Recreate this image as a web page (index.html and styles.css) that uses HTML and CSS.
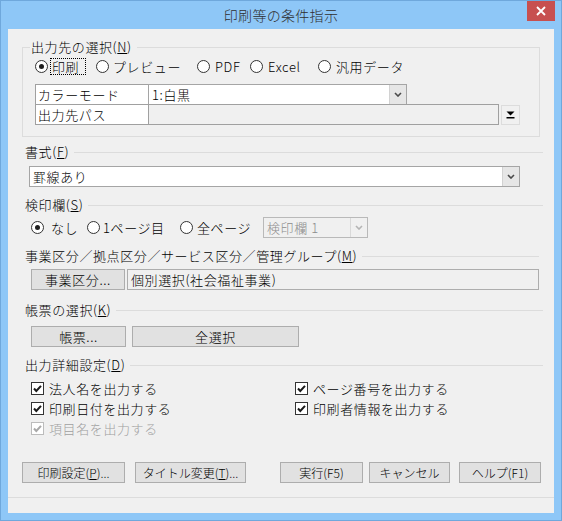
FILE: index.html
```html
<!DOCTYPE html>
<html lang="ja">
<head>
<meta charset="utf-8">
<title>印刷等の条件指示</title>
<link rel="stylesheet" href="styles.css">
</head>
<body>
<div class="window">
  <div class="titlebar">
    <div class="title">印刷等の条件指示</div>
    <div class="close"><svg width="10" height="10" viewBox="0 0 10 10"><path d="M1 1L9 9M9 1L1 9" stroke="#fff" stroke-width="1.8" fill="none"/></svg></div>
  </div>
  <div class="client">
    <fieldset class="group">
      <legend>出力先の選択(<u>N</u>)</legend>
      <div class="radios">
        <div class="ritem r1"><span class="rb on"></span><span class="focus">印刷</span></div>
        <div class="ritem r2"><span class="rb"></span><span>プレビュー</span></div>
        <div class="ritem r3"><span class="rb"></span><span>PDF</span></div>
        <div class="ritem r4"><span class="rb"></span><span>Excel</span></div>
        <div class="ritem r5"><span class="rb"></span><span>汎用データ</span></div>
      </div>
      <div class="grid">
        <div class="row">
          <div class="key">カラーモード</div>
          <div class="combo mode"><span class="val">1:白黒</span><span class="dd"><svg width="8" height="5" viewBox="0 0 8 5"><path d="M1 1L4 4L7 1" stroke="#4a4a4a" stroke-width="1.6" fill="none"/></svg></span></div>
        </div>
        <div class="row">
          <div class="key">出力先パス</div>
          <div class="path"></div>
          <div class="browse"><svg width="9" height="8" viewBox="0 0 9 8"><path d="M0.5 0.5H8.5L4.5 4.5Z" fill="#000"/><rect x="0.5" y="6" width="8" height="1.5" fill="#000"/></svg></div>
        </div>
      </div>
    </fieldset>

    <div class="hdr h-fmt"><span>書式(<u>F</u>)</span><i></i></div>
    <div class="combo fmt"><span class="val">罫線あり</span><span class="dd"><svg width="8" height="5" viewBox="0 0 8 5"><path d="M1 1L4 4L7 1" stroke="#4a4a4a" stroke-width="1.6" fill="none"/></svg></span></div>

    <div class="hdr h-stamp"><span>検印欄(<u>S</u>)</span><i></i></div>
    <div class="stamprow">
      <div class="ritem s1"><span class="rb on"></span><span>なし</span></div>
      <div class="ritem s2"><span class="rb"></span><span>1ページ目</span></div>
      <div class="ritem s3"><span class="rb"></span><span>全ページ</span></div>
      <div class="combo stamp disabled"><span class="val">検印欄 1</span><span class="dd"><svg width="8" height="5" viewBox="0 0 8 5"><path d="M1 1L4 4L7 1" stroke="#b4b4b4" stroke-width="1.6" fill="none"/></svg></span></div>
    </div>

    <div class="hdr h-biz"><span>事業区分／拠点区分／サービス区分／管理グループ(<u>M</u>)</span><i></i></div>
    <div class="bizrow">
      <div class="btn sp b-biz">事業区分...</div>
      <div class="field">個別選択(社会福祉事業)</div>
    </div>

    <div class="hdr h-rep"><span>帳票の選択(<u>K</u>)</span><i></i></div>
    <div class="reprow">
      <div class="btn sp b-rep">帳票...</div>
      <div class="btn sp b-all">全選択</div>
    </div>

    <div class="hdr h-det"><span>出力詳細設定(<u>D</u>)</span><i></i></div>
    <div class="checks">
      <div class="chk"><span class="cb"><svg width="11" height="11" viewBox="0 0 11 11"><path d="M2 5.5L4.3 8L9 2.8" stroke="#1a1a1a" stroke-width="2" fill="none"/></svg></span><span>法人名を出力する</span></div>
      <div class="chk"><span class="cb"><svg width="11" height="11" viewBox="0 0 11 11"><path d="M2 5.5L4.3 8L9 2.8" stroke="#1a1a1a" stroke-width="2" fill="none"/></svg></span><span>ページ番号を出力する</span></div>
      <div class="chk"><span class="cb"><svg width="11" height="11" viewBox="0 0 11 11"><path d="M2 5.5L4.3 8L9 2.8" stroke="#1a1a1a" stroke-width="2" fill="none"/></svg></span><span>印刷日付を出力する</span></div>
      <div class="chk"><span class="cb"><svg width="11" height="11" viewBox="0 0 11 11"><path d="M2 5.5L4.3 8L9 2.8" stroke="#1a1a1a" stroke-width="2" fill="none"/></svg></span><span>印刷者情報を出力する</span></div>
      <div class="chk off"><span class="cb"><svg width="11" height="11" viewBox="0 0 11 11"><path d="M2 5.5L4.3 8L9 2.8" stroke="#a8a8a8" stroke-width="2" fill="none"/></svg></span><span>項目名を出力する</span></div>
    </div>

    <div class="actions">
      <div class="btn a1">印刷設定(<u>P</u>)...</div>
      <div class="btn a2">タイトル変更(<u>T</u>)...</div>
      <div class="btn a3">実行(F5)</div>
      <div class="btn a4">キャンセル</div>
      <div class="btn a5">ヘルプ(F1)</div>
    </div>
    <div class="sep"></div>
  </div>
</div>
</body>
</html>
```

FILE: styles.css
```css
* { box-sizing: border-box; }
html, body { margin: 0; padding: 0; }
body {
  width: 562px;
  height: 521px;
  overflow: hidden;
  background: #8ec7f7;
  font-family: "Noto Sans CJK JP", "Noto Sans", sans-serif;
  font-size: 13px;
  font-weight: 300;
  color: #000;
}
u { text-decoration: underline; text-underline-offset: 1px; }

.window {
  width: 562px;
  height: 521px;
  background: #8ec7f7;
  border: 1px solid #6fa8dc;
  display: flex;
  flex-direction: column;
}
.titlebar {
  height: 28px;
  position: relative;
  flex: none;
}
.title {
  text-align: center;
  font-size: 14px;
  line-height: 28px;
  color: #2e2e2e;
  letter-spacing: 0.3px;
}
.close {
  position: absolute;
  top: 0;
  right: 6px;
  width: 28px;
  height: 20px;
  background: #c75050;
  display: flex;
  align-items: center;
  justify-content: center;
}
.close svg { display: block; }

.client {
  width: 546px;
  height: 484px;
  margin: 0 7px;
  background: #f0f0f0;
  display: flex;
  flex-direction: column;
  letter-spacing: 0.6px;
}

/* group box */
.group {
  margin: 11px 0 0 14px;
  width: 518px;
  border: 1px solid #dcdcdc;
  padding: 0 0 11px 0;
  min-width: 0;
}
.group legend {
  margin-left: 7px;
  padding: 0 5px 0 1px;
  line-height: 14px;
  font-size: 13px;
}
.radios {
  display: flex;
  align-items: center;
  height: 20px;
  margin: 2px 0 0 12px;
}
.ritem {
  display: flex;
  align-items: center;
  gap: 5px;
  white-space: nowrap;
  line-height: 15px;
}
.r1 { width: 61px; gap: 3px; }
.r2 { width: 101px; gap: 4px; }
.r3 { width: 53px; }
.r4 { width: 68px; }
.focus { outline: 1px dotted #000; outline-offset: 0; padding: 0 6px 0 1px; }
.rb {
  width: 13px;
  height: 13px;
  border: 1px solid #333;
  border-radius: 50%;
  background: #fff;
  position: relative;
  flex: none;
}
.rb.on::after {
  content: "";
  position: absolute;
  left: 3px;
  top: 3px;
  width: 5px;
  height: 5px;
  border-radius: 50%;
  background: #1e1e1e;
}

.grid { margin: 8px 0 0 12px; }
.row { display: flex; height: 21px; }
.row + .row { margin-top: -1px; }
.key {
  width: 114px;
  height: 21px;
  border: 1px solid #a0a0a0;
  background: #fff;
  padding-left: 2px;
  line-height: 19px;
  white-space: nowrap;
}
.path {
  width: 351px;
  height: 21px;
  margin-left: -1px;
  border: 1px solid #a0a0a0;
  background: #f0f0f0;
}
.browse {
  width: 19px;
  height: 20px;
  margin: 1px 0 0 2px;
  border: 1px solid #dcdcdc;
  background: #f0f0f0;
  display: flex;
  align-items: center;
  justify-content: center;
}
.browse svg { display: block; }

/* combo */
.combo {
  display: flex;
  height: 21px;
  border: 1px solid #a5a5a5;
  background: #fff;
}
.combo .val {
  flex: 1;
  padding-left: 3px;
  line-height: 19px;
  white-space: nowrap;
  overflow: hidden;
}
.combo .dd {
  width: 17px;
  flex: none;
  background: #e6e6e6;
  border-left: 1px solid #d2d2d2;
  display: flex;
  align-items: center;
  justify-content: center;
}
.combo .dd svg { display: block; }
.combo.mode { width: 259px; margin-left: -1px; }
.combo.fmt { width: 491px; margin: 7px 0 0 21px; }
.combo.disabled { background: #f0f0f0; color: #8c8c8c; border-color: #b9b9b9; }
.combo.disabled .dd { background: #f0f0f0; border-left-color: #d9d9d9; }
.combo.stamp { width: 105px; }

/* section headers */
.hdr {
  display: flex;
  align-items: center;
  height: 14px;
  margin-left: 17px;
  width: 518px;
}
.hdr span { line-height: 14px; white-space: nowrap; }
.hdr i { flex: 1; height: 1px; background: #dcdcdc; margin-left: 5px; }
.h-fmt { margin-top: 8px; }
.h-stamp { margin-top: 11px; }
.h-biz { margin-top: 11px; width: 514px; }
.h-rep { margin-top: 13px; }
.h-det { margin-top: 11px; }

.stamprow {
  display: flex;
  align-items: center;
  height: 21px;
  margin: 5px 0 0 23px;
}
.s1 { width: 56px; gap: 7px; }
.s2 { width: 93px; gap: 3px; }
.s3 { width: 83px; gap: 4px; }

/* buttons */
.btn {
  height: 21px;
  border: 1px solid #adadad;
  background: #e1e1e1;
  text-align: center;
  line-height: 19px;
  font-size: 12px;
  letter-spacing: 0;
  white-space: nowrap;
}
.btn.sp { font-size: 13px; letter-spacing: 0.6px; }

.bizrow { display: flex; margin: 6px 0 0 23px; }
.b-biz { width: 94px; }
.field {
  width: 412px;
  height: 21px;
  margin-left: 2px;
  border: 1px solid #adadad;
  background: #f0f0f0;
  padding-left: 3px;
  line-height: 19px;
  white-space: nowrap;
}

.reprow { display: flex; margin: 9px 0 0 23px; }
.b-rep { width: 95px; }
.b-all { width: 167px; margin-left: 6px; }

/* checks */
.checks {
  display: grid;
  grid-template-columns: 264px auto;
  margin: 6px 0 0 23px;
}
.chk {
  display: flex;
  align-items: center;
  gap: 5px;
  height: 20px;
  white-space: nowrap;
}
.cb {
  width: 13px;
  height: 13px;
  border: 1px solid #333;
  background: #fff;
  flex: none;
  display: flex;
  align-items: center;
  justify-content: center;
}
.cb svg { display: block; }
.chk.off { color: #a0a0a0; }
.chk.off .cb { border-color: #bcbcbc; }

/* bottom actions */
.actions { display: flex; margin-top: 24px; }
.a1 { width: 103px; margin-left: 14px; }
.a2 { width: 111px; margin-left: 10px; }
.a3 { width: 83px; margin-left: 34px; }
.a4 { width: 81px; margin-left: 6px; }
.a5 { width: 82px; margin-left: 9px; }

.sep {
  height: 1px;
  background: #dcdcdc;
  margin-top: 14px;
  flex: none;
}
```
